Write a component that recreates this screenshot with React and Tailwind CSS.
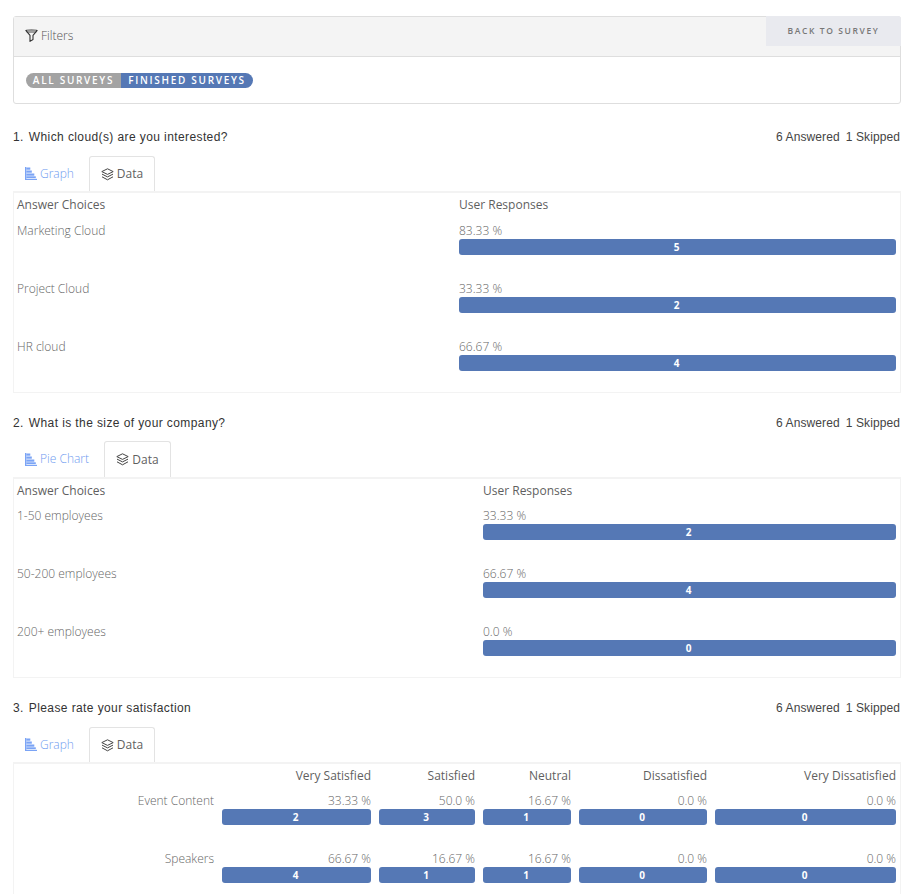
import React from "react";

const FunnelIcon = () => (
  <svg width="13" height="13" viewBox="0 0 13 13" fill="none" stroke="#333" strokeWidth="1.1" strokeLinejoin="round" className="shrink-0">
    <path d="M.8 1.4C.8.800 12.200.800 12.200 1.400L8 6.300v4.200l-3 1.900V6.300z" />
    <path d="M1.800 3h9.400" strokeWidth=".9" />
  </svg>
);
const BarsIcon = () => (
  <svg width="12" height="13" viewBox="0 0 12 13" fill="#7ba4f5" className="shrink-0">
    <rect x="0" y="0" width="1.300" height="13" />
    <rect x="0" y="11.800" width="12" height="1.200" />
    <rect x="1.300" y=".5" width="4" height="2.200" />
    <rect x="1.300" y="3.500" width="5.500" height="2.200" />
    <rect x="1.300" y="6.500" width="8" height="2.200" />
    <rect x="1.300" y="9.300" width="9.500" height="1.800" />
  </svg>
);
const LayersIcon = () => (
  <svg width="13" height="13" viewBox="0 0 13 13" fill="none" stroke="#444" strokeWidth="1" strokeLinejoin="round" className="shrink-0">
    <path d="M6.500 .8 12.200 3.600 6.500 6.400.8 3.600z" />
    <path d="M1 6.100 6.500 8.900 12 6.100" />
    <path d="M1 8.800 6.500 11.800 12 8.800" />
  </svg>
);

const Bar = ({ v }) => (
  <div className="h-4 pr-[2px] rounded-[3px] bg-[#5578b5] text-white text-[10px] font-bold leading-4 text-center font-['Open_Sans',sans-serif]">{v}</div>
);

const Heading = ({ n, text }) => (
  <div className="flex justify-between items-center h-[16px] pr-[1px] text-[12px] leading-4 tracking-[0.4px] text-[#333] font-['Liberation_Sans',sans-serif]">
    <div><span>{n}.</span><span className="ml-[5px]">{text}</span></div>
    <div className="text-[#444] tracking-[0.1px]"><span>6 Answered</span><span className="ml-[6px]">1 Skipped</span></div>
  </div>
);

const Tabs = ({ first, tabClass, h }) => (
  <div className={"flex items-stretch text-[12px] font-['Open_Sans',sans-serif] " + h}>
    <div className="flex items-center gap-[3px] pl-[12px] pr-[15px] text-[#6f9bf0] font-light">
      <BarsIcon />
      <span>{first}</span>
    </div>
    <div className={"flex items-center justify-center gap-[3px] border border-b-0 border-[#e3e3e3] rounded-t-[3px] bg-white text-[#5f5f5f] " + tabClass}>
      <LayersIcon />
      <span>Data</span>
    </div>
  </div>
);

const SimpleTable = ({ col, rows, h, headH }) => (
  <div className={"border-t-2 border-x border-b border-[#f3f3f3] text-[12px] font-['Open_Sans',sans-serif] pl-[3px] pr-[4px] " + h}>
    <div className={"grid " + col}>
      <div className={"pt-[4px] leading-4 text-[#5f5f5f] " + headH}>Answer Choices</div>
      <div className={"pt-[4px] leading-4 text-[#5f5f5f] " + headH}>User Responses</div>
      {rows.map(([label, pct, v]) => (
        <React.Fragment key={label}>
          <div className="h-[58px] leading-4 text-[#666] font-light">{label}</div>
          <div className="h-[58px]">
            <div className="h-[16px] leading-4 text-[#666] font-light">{pct}</div>
            <Bar v={v} />
          </div>
        </React.Fragment>
      ))}
    </div>
  </div>
);

const MATRIX_COLS = "grid grid-cols-[197px_149px_96px_88px_128px_181px] gap-x-[8px]";

const MatrixRow = ({ label, cells }) => (
  <div className={MATRIX_COLS + " h-[58px]"}>
    <div className="text-right leading-4 text-[#666] font-light">{label}</div>
    {cells.map(([pct, v], i) => (
      <div key={i}>
        <div className="h-[16px] leading-4 text-right text-[#666] font-light">{pct}</div>
        <Bar v={v} />
      </div>
    ))}
  </div>
);

export default function App() {
  return (
    <div className="h-[894px] overflow-hidden bg-white pl-[13px] pr-[11px] pt-[16px] font-['Open_Sans',sans-serif]">
      <div className="h-[88px] border border-[#dedede] rounded-[3px]">
        <div className="relative flex items-center h-[40px] pb-[2px] bg-[#f4f4f4] border-b border-[#dedede] pl-[11px] gap-[3px] text-[12px] text-[#555] font-light">
          <FunnelIcon />
          <span>Filters</span>
          <div className="absolute -top-px -right-px w-[135px] h-[30px] flex items-center justify-center bg-[#e9eaef] text-[8.500px] font-semibold tracking-[1.6px] text-[#777] rounded-tr-[3px]">
            BACK TO SURVEY
          </div>
        </div>
        <div className="flex pl-[12px] pt-[16px]">
          <div className="flex h-[15px] rounded-full overflow-hidden text-[10px] font-semibold tracking-[1.700px] leading-[14px] text-white">
            <div className="w-[95px] bg-[#a3a3a3] text-center">ALL SURVEYS</div>
            <div className="w-[132px] bg-[#5578b5] text-center">FINISHED SURVEYS</div>
          </div>
        </div>
      </div>

      <div className="mt-[25px]"><Heading n="1" text="Which cloud(s) are you interested?" /></div>
      <div className="mt-[11px]"><Tabs first="Graph" tabClass="w-[66px]" h="h-[35px]" /></div>
      <SimpleTable
        h="h-[202px]"
        headH="h-[30px]"
        col="grid-cols-[442px_437px]"
        rows={[
          ["Marketing Cloud", "83.33 %", 5],
          ["Project Cloud", "33.33 %", 2],
          ["HR cloud", "66.67 %", 4],
        ]}
      />

      <div className="mt-[22px]"><Heading n="2" text="What is the size of your company?" /></div>
      <div className="mt-[10px]"><Tabs first="Pie Chart" tabClass="w-[67px]" h="h-[36px]" /></div>
      <SimpleTable
        h="h-[201px]"
        headH="h-[29px]"
        col="grid-cols-[466px_413px]"
        rows={[
          ["1-50 employees", "33.33 %", 2],
          ["50-200 employees", "66.67 %", 4],
          ["200+ employees", "0.0 %", 0],
        ]}
      />

      <div className="mt-[22px]"><Heading n="3" text="Please rate your satisfaction" /></div>
      <div className="mt-[11px]"><Tabs first="Graph" tabClass="w-[66px]" h="h-[35px]" /></div>
      <div className="border-t-2 border-x border-[#f3f3f3] h-[140px] pl-[3px] pr-[4px] text-[12px]">
        <div className={MATRIX_COLS + " h-[29px] pt-[4px] leading-4 text-right text-[#5f5f5f]"}>
          <div />
          <div>Very Satisfied</div>
          <div>Satisfied</div>
          <div>Neutral</div>
          <div>Dissatisfied</div>
          <div>Very Dissatisfied</div>
        </div>
        <MatrixRow label="Event Content" cells={[["33.33 %", 2], ["50.0 %", 3], ["16.67 %", 1], ["0.0 %", 0], ["0.0 %", 0]]} />
        <MatrixRow label="Speakers" cells={[["66.67 %", 4], ["16.67 %", 1], ["16.67 %", 1], ["0.0 %", 0], ["0.0 %", 0]]} />
      </div>
    </div>
  );
}
